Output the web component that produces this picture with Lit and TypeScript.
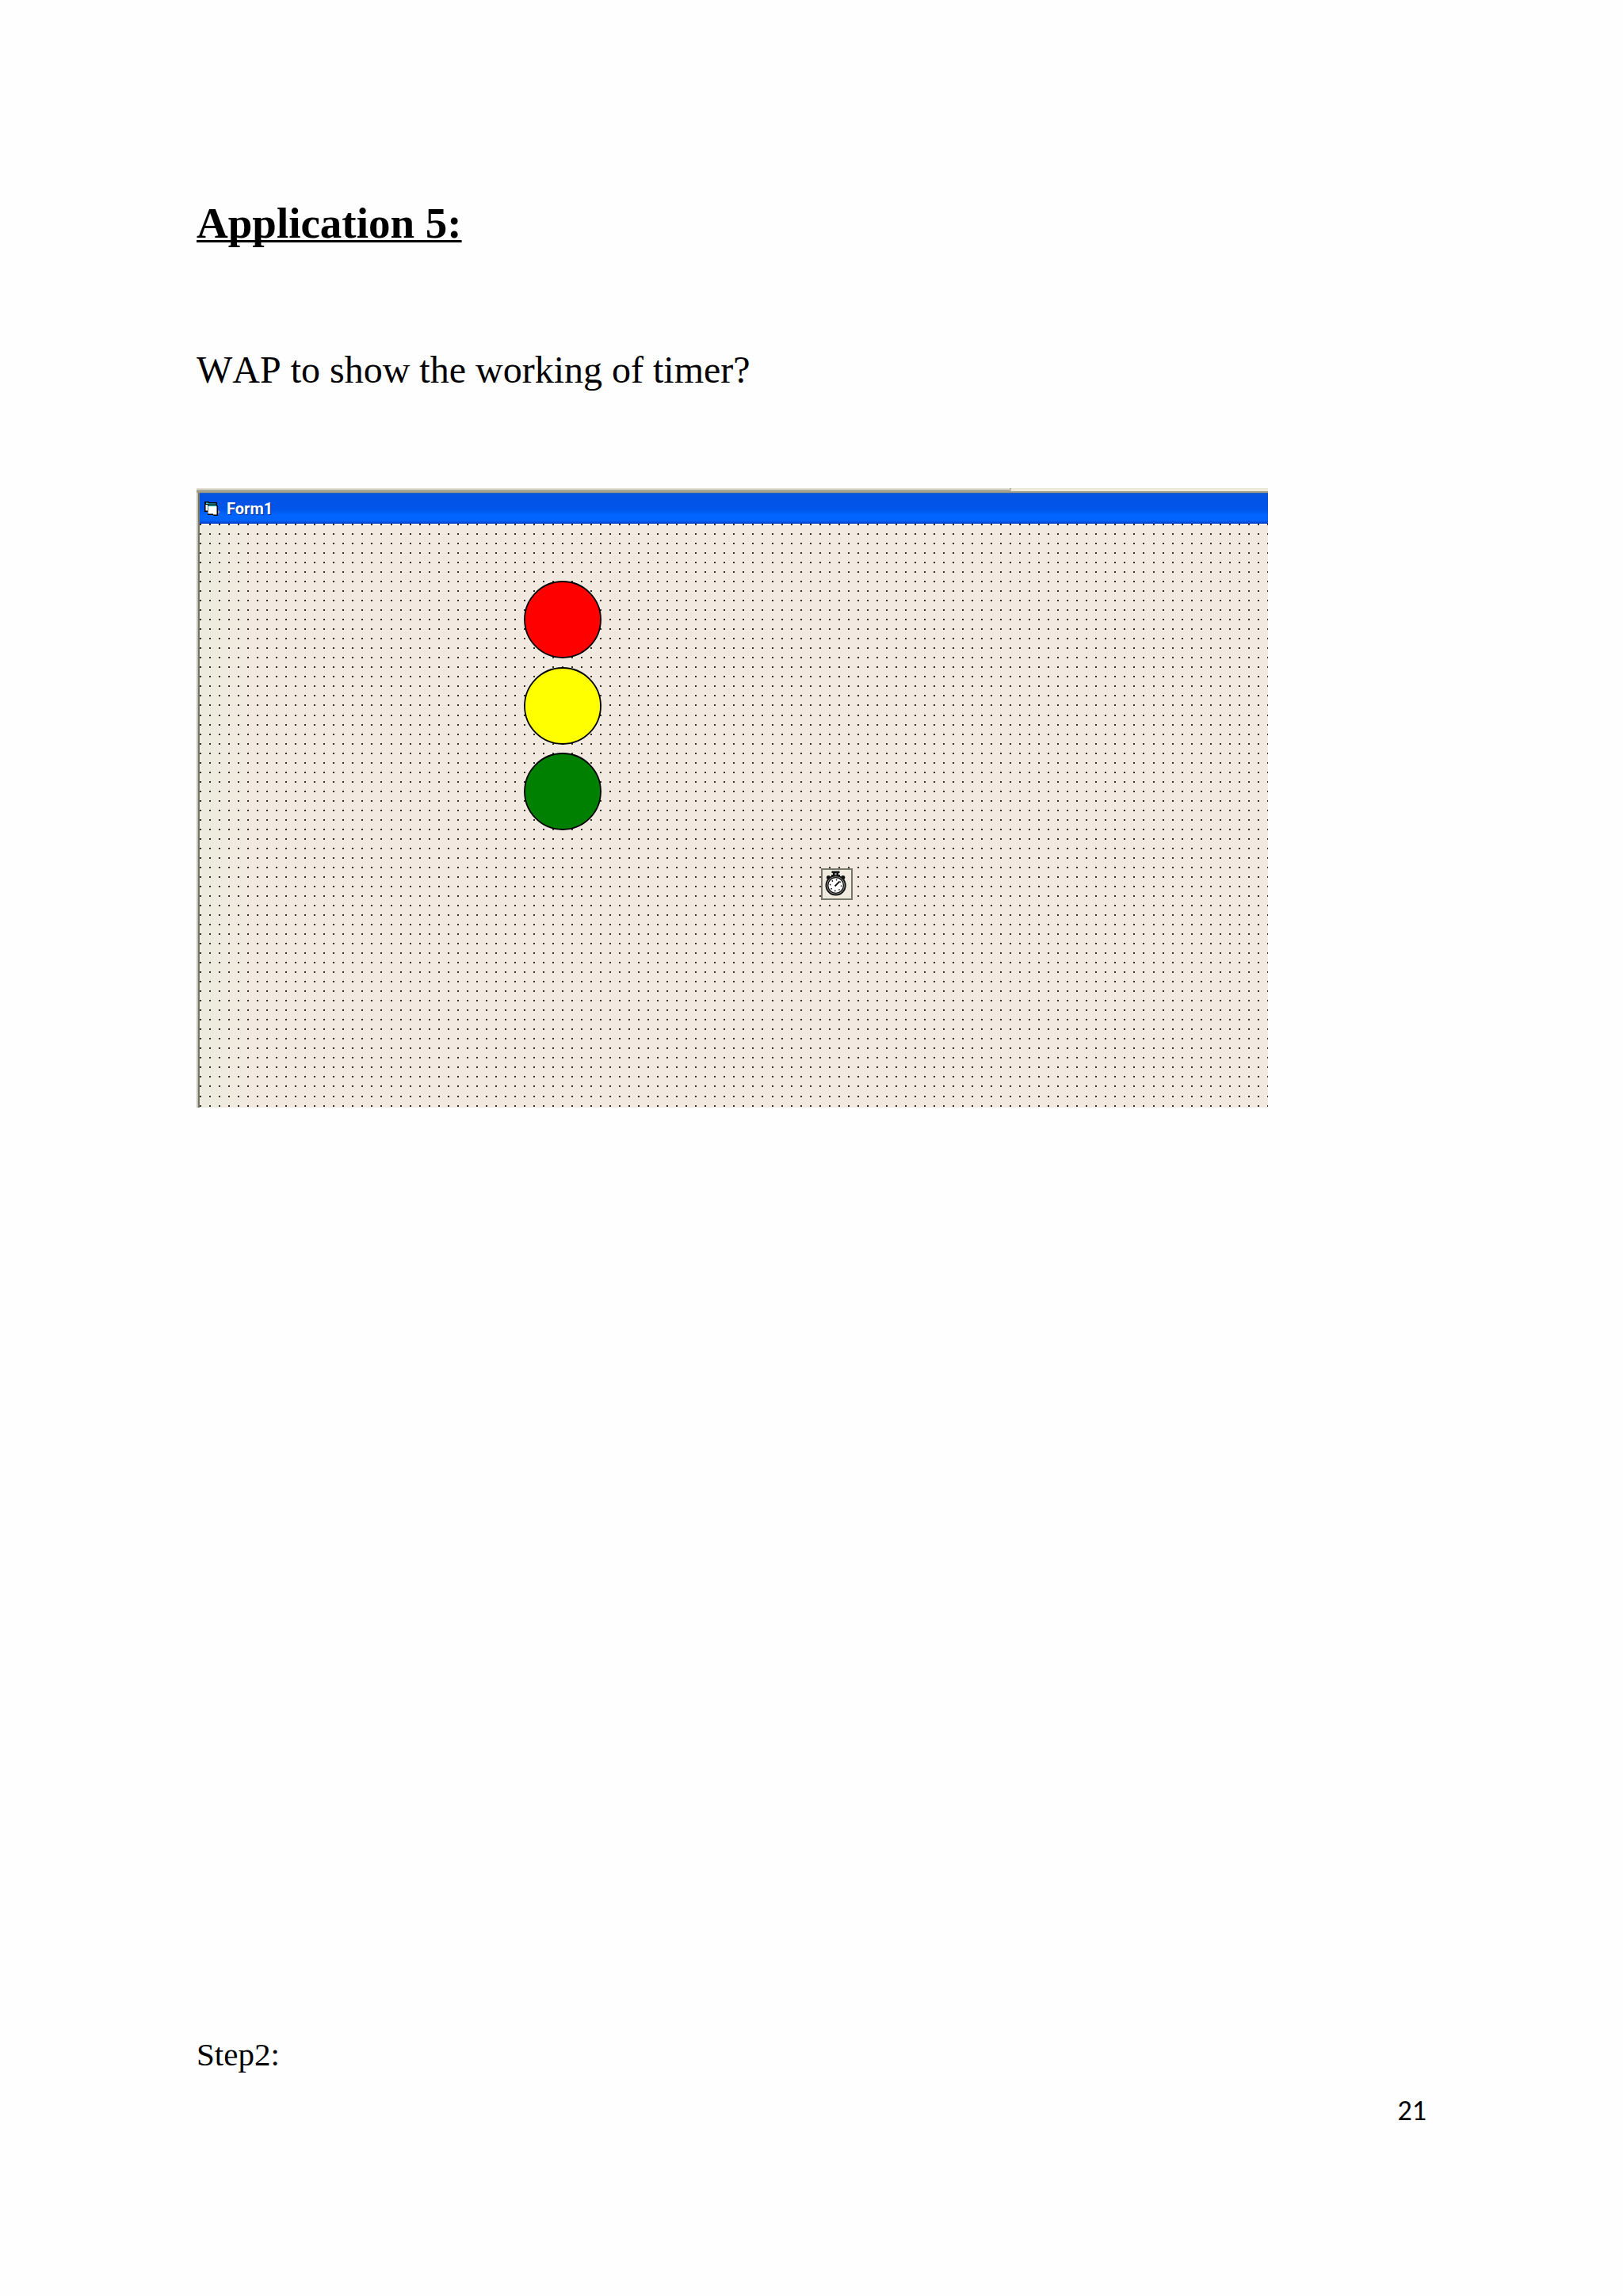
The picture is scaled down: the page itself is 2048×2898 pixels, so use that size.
import { LitElement, html, svg, css } from "lit";
import { customElement } from "lit/decorators.js";

const STEP = 12.025;
const COLUMNS = 113;
const ROWS = 62;

/** One path holding every alignment dot of the form designer grid. */
function gridPath(): string {
  let d = "";
  for (let r = 0; r < ROWS; r++) {
    for (let c = 0; c < COLUMNS; c++) {
      d += `M${Math.round(c * STEP)} ${Math.round(r * STEP)}h2v2h-2z`;
    }
  }
  return d;
}

const LIGHTS = [
  { cy: 121, fill: "#ff0000" },
  { cy: 230, fill: "#ffff00" },
  { cy: 338, fill: "#008000" },
];

@customElement("form-window")
export class FormWindow extends LitElement {
  static styles = css`
    :host { display: block; }
    .edge { height: 6px; background: linear-gradient(#ece9d8 0 4px, #a09e84 4px); }
    .edge-dark { box-sizing: border-box; width: 76%; height: 4px; background: linear-gradient(#e4e2d4 0 2px, #aca899 2px); border-right: 2px solid #bdbaa8; }
    .frame { border-left: 2px solid #c6c4b6; }
    .inner { border-left: 2px solid #77766a; }
    .bar {
      display: flex; align-items: center; gap: 8px; height: 39px; padding-left: 6px; box-sizing: border-box;
      background: linear-gradient(#1c5fc4 0, #0453e4 3px, #0054e8 20px, #0066ff 29px, #0064fc 35px, #0038c0 39px);
    }
    .title {
      margin: 0; color: #fff; font: bold 20px/24px Roboto, "Liberation Sans", sans-serif;
      text-shadow: 1px 1px 1px #0a2a90;
    }
    .logo { display: block; }
    .canvas { display: block; width: 100%; height: auto; background: #f2eae0; }
  `;

  render() {
    return html`
      <div class="edge"><div class="edge-dark"></div></div>
      <div class="frame"><div class="inner">
        <div class="bar">
          <svg class="logo" width="20" height="18" viewBox="0 0 20 18" aria-hidden="true">
            <path d="M0 0H6V1H16V5H17V18H11V17H4V13H0Z" fill="#000" />
            <path d="M1.5 4H4V11.5H1.5Z" fill="#fff" />
            <path d="M4.5 6H15.5V16.5H11V15.5H4.5Z" fill="#fff" />
            <path d="M2 1.5H5V2.5H14.5V3.5H5V3H2Z" fill="#2fd6d6" />
            <path d="M4.5 5H15V6.2H4.5Z" fill="#2fd6d6" />
            <path d="M17 11l3 2-3 3z" fill="#8c8c9c" />
          </svg>
          <h2 class="title">Form1</h2>
        </div>
        <svg class="canvas" viewBox="0 0 1348 737" role="img" aria-label="Form1">
          <defs>
            <linearGradient id="tint"><stop offset="0" stop-color="#ecebde" /><stop offset="1" stop-color="#ecebde" stop-opacity="0" /></linearGradient>
          </defs>
          <rect width="60" height="737" fill="url(#tint)" />
          <rect width="1348" height="1" fill="#fff" />
          <path d=${gridPath()} fill="#34302c" shape-rendering="crispEdges" />
          ${LIGHTS.map((l) => svg`<circle cx="458" cy=${l.cy} r="48" fill=${l.fill} stroke="#000" stroke-width="1.8" />`)}
          <g transform="translate(784 435)">
            <rect width="40" height="40" fill="#efebde" />
            <path d="M1 40V1H40M0 39H39V0" fill="none" stroke="#77766a" stroke-width="2" />
            <path d="M13.5 3.5H23.5V6H22V8H24V10H13V8H15V6H13.5Z" fill="#111" />
            <path d="M17.5 6H19.5V9H17.5Z" fill="#aaa" />
            <circle cx="9.5" cy="11.5" r="2.6" fill="#111" />
            <circle cx="27.7" cy="11.5" r="2.6" fill="#111" />
            <circle cx="18.6" cy="21.5" r="12.2" fill="#8e8e88" stroke="#111" stroke-width="1.8" />
            <circle cx="18.6" cy="21.5" r="9.8" fill="#fff" stroke="#111" stroke-width="1.3" />
            <circle cx="18.6" cy="21.5" r="7" fill="none" stroke="#111" stroke-width="1.5" stroke-dasharray="1.5 3.998" />
            <path d="M17.5 22.5L23.5 16.5" stroke="#111" stroke-width="1.8" />
          </g>
        </svg>
      </div></div>
    `;
  }
}

@customElement("app-root")
export class AppRoot extends LitElement {
  static styles = css`
    :host { display: block; }
    .page {
      display: flex; flex-direction: column; box-sizing: border-box; min-height: 100vh;
      padding: 250px 248px 214px; background: #fefefe; color: #000;
      font-family: "Liberation Serif", "Times New Roman", serif; font-kerning: none;
    }
    .heading {
      margin: 0; font-size: 55px; line-height: 64px; font-weight: bold;
      text-decoration: underline; text-decoration-thickness: 3px; text-underline-offset: 3px; text-decoration-skip-ink: none;
    }
    .question { margin: 125px 0 121px; font-size: 48px; line-height: 56px; }
    .form { width: 100%; max-width: 1352px; }
    .step { margin: auto 0 27px; font-size: 41px; line-height: 48px; }
    .number { text-align: right; font-family: Carlito, Lato, sans-serif; font-size: 36px; line-height: 40px; }
  `;

  render() {
    return html`
      <main class="page">
        <h1 class="heading">Application 5:</h1>
        <p class="question">WAP to show the working of timer?</p>
        <form-window class="form"></form-window>
        <p class="step">Step2:</p>
        <footer class="number">21</footer>
      </main>
    `;
  }
}
